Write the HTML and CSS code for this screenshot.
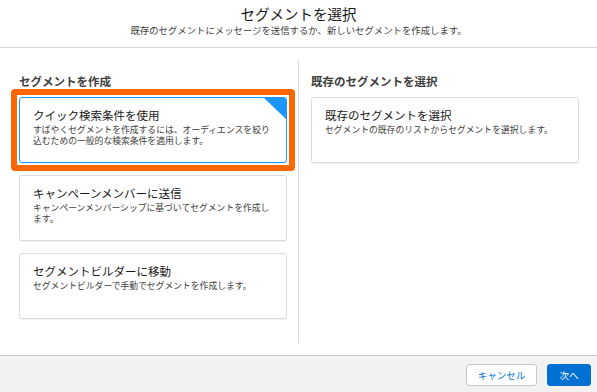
FILE: index.html
```html
<!DOCTYPE html>
<html lang="ja">
<head>
    <meta charset="UTF-8">
    <meta name="viewport" content="width=device-width, initial-scale=1.0">
    <title>セグメントを選択</title>
    <link rel="stylesheet" href="styles.css">
</head>
<body>

<div class="modal">
    <!-- Header -->
    <header class="modal-header">
        <h2>セグメントを選択</h2>
        <p>既存のセグメントにメッセージを送信するか、新しいセグメントを作成します。</p>
    </header>

    <!-- Body -->
    <div class="modal-body">
        <section class="col col-left">
            <h3>セグメントを作成</h3>
            <div class="card-list">
                <div class="card selected">
                    <span class="corner"></span>
                    <div class="card-title">クイック検索条件を使用</div>
                    <div class="card-desc">すばやくセグメントを作成するには、オーディエンスを絞り込むための一般的な検索条件を適用します。</div>
                </div>
                <div class="card">
                    <div class="card-title">キャンペーンメンバーに送信</div>
                    <div class="card-desc">キャンペーンメンバーシップに基づいてセグメントを作成します。</div>
                </div>
                <div class="card">
                    <div class="card-title">セグメントビルダーに移動</div>
                    <div class="card-desc">セグメントビルダーで手動でセグメントを作成します。</div>
                </div>
            </div>
        </section>

        <section class="col col-right">
            <h3>既存のセグメントを選択</h3>
            <div class="card-list">
                <div class="card">
                    <div class="card-title">既存のセグメントを選択</div>
                    <div class="card-desc">セグメントの既存のリストからセグメントを選択します。</div>
                </div>
            </div>
        </section>
    </div>

    <!-- Footer -->
    <footer class="modal-footer">
        <button class="btn btn-neutral">キャンセル</button>
        <button class="btn btn-brand">次へ</button>
    </footer>
</div>

</body>
</html>
```

FILE: styles.css
```css
html, body {
    margin: 0;
    padding: 0;
    height: 100%;
}

body {
    font-family: "Noto Sans CJK JP", sans-serif;
    background-color: #fff;
    color: #080707;
}

.modal {
    display: flex;
    flex-direction: column;
    height: 392px;
}

/* Header */
.modal-header {
    height: 48px;
    box-sizing: border-box;
    padding-top: 4px;
    text-align: center;
    border-bottom: 1px solid #d4d4d4;
}

.modal-header h2 {
    margin: 0;
    font-size: 14.5px;
    font-weight: normal;
    line-height: 20px;
    color: #181818;
}

.modal-header p {
    margin: 0;
    font-size: 9.4px;
    line-height: 12px;
    color: #3e3e3c;
}

/* Body */
.modal-body {
    flex: 1;
    display: flex;
    padding: 12px 18px 12px 19px;
}

.col h3 {
    margin: 14px 0 9px;
    font-size: 11.5px;
    line-height: 14px;
    font-weight: bold;
    color: #3e3e3c;
}

.col-left {
    width: 268px;
    padding-right: 11px;
    border-right: 1px solid #dddbda;
}

.col-right {
    width: 268px;
    padding-left: 12px;
}

.card-list {
    display: flex;
    flex-direction: column;
    gap: 12px;
}

.card {
    position: relative;
    height: 66px;
    box-sizing: border-box;
    padding: 10px 13px 0;
    background-color: #fff;
    border: 1px solid #dddbda;
    border-radius: 3px;
    box-shadow: 0 1px 1px rgba(0, 0, 0, 0.06);
}

.card-title {
    font-size: 11.5px;
    line-height: 15px;
    color: #181818;
}

.card-desc {
    margin-top: 1px;
    font-size: 8.8px;
    line-height: 11px;
    color: #3e3e3c;
}

.card.selected {
    border-color: #1b96ff;
}

/* orange highlight ring around the chosen card */
.card.selected::before {
    content: "";
    position: absolute;
    top: -9px;
    left: -9px;
    right: -9px;
    bottom: -9px;
    border: 6px solid #fe6600;
    border-radius: 4px;
}

.corner {
    position: absolute;
    top: 0;
    right: 0;
    width: 0;
    height: 0;
    border-top: 21px solid #1b96ff;
    border-left: 22px solid transparent;
    border-top-right-radius: 2px;
}

/* Footer */
.modal-footer {
    height: 37px;
    box-sizing: border-box;
    display: flex;
    justify-content: flex-end;
    align-items: flex-start;
    gap: 10px;
    padding: 8px 6px 0 0;
    background-color: #f3f2f2;
    border-top: 1px solid #c9c7c5;
}

.btn {
    height: 22px;
    padding: 0;
    font-family: "Noto Sans CJK JP", sans-serif;
    font-size: 9.5px;
    border-radius: 3px;
    cursor: pointer;
}

.btn-neutral {
    width: 71px;
    color: #0070d2;
    background-color: #fff;
    border: 1px solid #c9c7c5;
}

.btn-brand {
    width: 44px;
    color: #fff;
    background-color: #0070d2;
    border: 1px solid #0070d2;
}
```
